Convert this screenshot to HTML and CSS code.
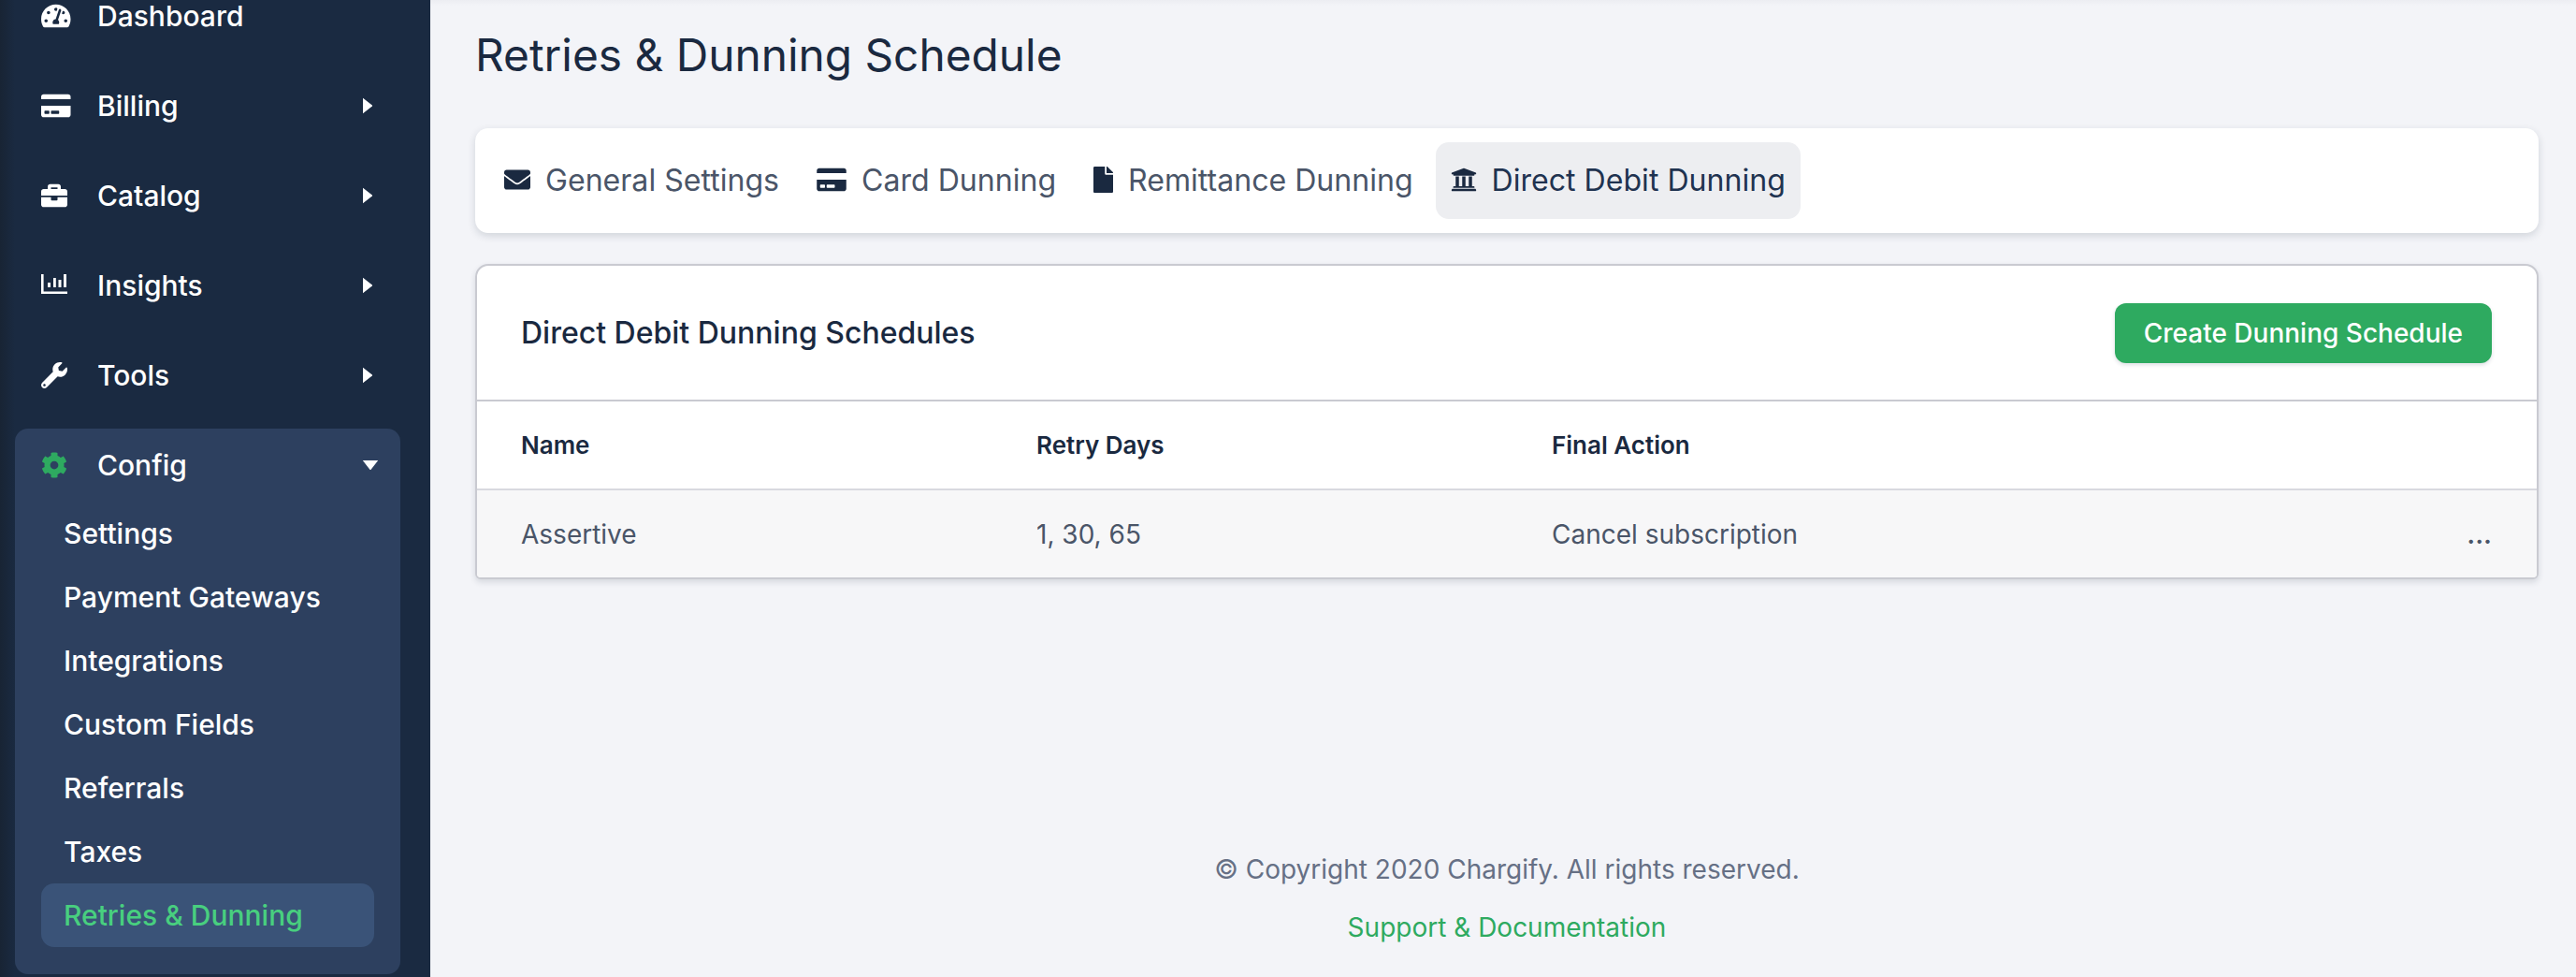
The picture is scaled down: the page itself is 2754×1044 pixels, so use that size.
FILE: index.html
```html
<!DOCTYPE html>
<html lang="en">
<head>
<meta charset="utf-8">
<title>Retries &amp; Dunning Schedule</title>
<link rel="stylesheet" href="styles.css">
</head>
<body>
<div class="app">
  <aside class="sidebar">
    <nav class="nav">
      <a class="nav-row"><svg class="nav-icon" preserveAspectRatio="xMinYMid meet" viewBox="0 0 576 512"><path d="M288 32C128.94 32 0 160.94 0 320c0 52.8 14.25 102.26 39.06 144.8 5.61 9.62 16.3 15.2 27.44 15.2h443c11.14 0 21.83-5.58 27.44-15.2C561.75 422.26 576 372.8 576 320c0-159.06-128.94-288-288-288zm0 64c14.71 0 26.58 10.13 30.32 23.65-1.11 2.26-2.64 4.23-3.45 6.67l-9.22 27.67c-5.13 3.49-10.97 6.01-17.64 6.01-17.67 0-32-14.33-32-32S270.33 96 288 96zM96 384c-17.67 0-32-14.33-32-32s14.33-32 32-32 32 14.33 32 32-14.33 32-32 32zm48-160c-17.67 0-32-14.33-32-32s14.33-32 32-32 32 14.33 32 32-14.33 32-32 32zm246.77-72.41l-61.33 184C343.13 347.33 352 364.54 352 384c0 11.72-3.38 22.55-8.88 32H232.88c-5.5-9.45-8.88-20.28-8.88-32 0-33.94 26.5-61.43 59.9-63.59l61.34-184.01c4.17-12.56 17.73-19.45 30.36-15.17 12.57 4.19 19.35 17.79 15.17 30.36zm14.66 57.2l15.52-46.55c3.47-1.29 7.13-2.23 11.05-2.23 17.67 0 32 14.33 32 32s-14.33 32-32 32c-11.38-.01-20.89-6.28-26.57-15.22zM480 384c-17.67 0-32-14.33-32-32s14.33-32 32-32 32 14.33 32 32-14.33 32-32 32z"/></svg><span class="nav-label">Dashboard</span></a>
      <a class="nav-row"><svg class="nav-icon" preserveAspectRatio="xMinYMid meet" viewBox="0 0 576 512"><path d="M0 432c0 26.5 21.5 48 48 48h480c26.5 0 48-21.5 48-48V256H0v176zm192-68c0-6.6 5.4-12 12-12h136c6.6 0 12 5.4 12 12v40c0 6.6-5.4 12-12 12H204c-6.6 0-12-5.4-12-12v-40zm-128 0c0-6.6 5.4-12 12-12h72c6.6 0 12 5.4 12 12v40c0 6.6-5.4 12-12 12H76c-6.6 0-12-5.4-12-12v-40zM576 80v48H0V80c0-26.5 21.5-48 48-48h480c26.5 0 48 21.5 48 48z"/></svg><span class="nav-label">Billing</span><svg class="caret" viewBox="0 0 10 18"><path d="M0 0.8 9.6 8.2a1 1 0 0 1 0 1.6L0 17.2z"/></svg></a>
      <a class="nav-row"><svg class="nav-icon" preserveAspectRatio="xMinYMid meet" viewBox="0 0 512 512"><path d="M320 336c0 8.84-7.16 16-16 16h-96c-8.84 0-16-7.16-16-16v-48H0v144c0 25.6 22.4 48 48 48h416c25.6 0 48-22.4 48-48V288H320v48zm144-208h-80V80c0-25.6-22.4-48-48-48H176c-25.6 0-48 22.4-48 48v48H48c-25.6 0-48 22.4-48 48v80h512v-80c0-25.6-22.4-48-48-48zm-144 0H192V96h128v32z"/></svg><span class="nav-label">Catalog</span><svg class="caret" viewBox="0 0 10 18"><path d="M0 0.8 9.6 8.2a1 1 0 0 1 0 1.6L0 17.2z"/></svg></a>
      <a class="nav-row"><svg class="nav-icon" preserveAspectRatio="xMinYMid meet" viewBox="0 0 32 28"><path d="M0 2h2.600v18.500H28V23H0zM7 11h3v5H7zM13 6h2.800v10H13zM18.500 8h3v8h-3zM24 2h3v14h-3z"/></svg><span class="nav-label">Insights</span><svg class="caret" viewBox="0 0 10 18"><path d="M0 0.8 9.6 8.2a1 1 0 0 1 0 1.6L0 17.2z"/></svg></a>
      <a class="nav-row"><svg class="nav-icon" preserveAspectRatio="xMinYMid meet" viewBox="0 0 512 512"><path d="M507.730 109.100c-2.240-9.030-13.540-12.090-20.120-5.510l-74.360 74.360-67.880-11.310-11.310-67.880 74.360-74.360c6.620-6.620 3.430-17.900-5.660-20.160-47.380-11.740-99.550.91-136.580 37.930-39.640 39.640-50.550 97.100-34.050 147.200L18.740 402.760c-24.990 24.990-24.990 65.510 0 90.500 24.990 24.990 65.510 24.990 90.500 0l213.210-213.210c50.120 16.710 107.470 5.680 147.370-34.220 37.070-37.070 49.700-89.320 37.910-136.730zM64 472c-13.250 0-24-10.750-24-24 0-13.260 10.750-24 24-24s24 10.740 24 24c0 13.250-10.750 24-24 24z"/></svg><span class="nav-label">Tools</span><svg class="caret" viewBox="0 0 10 18"><path d="M0 0.8 9.600 8.200a1 1 0 0 1 0 1.600L0 17.200z"/></svg></a>
      <div class="nav-group">
        <a class="nav-row nav-row-group"><svg class="nav-icon nav-icon-green" preserveAspectRatio="xMinYMid meet" viewBox="0 0 512 512"><path d="M487.400 315.700l-42.600-24.600c4.300-23.200 4.300-47 0-70.200l42.600-24.600c4.900-2.800 7.100-8.600 5.500-14-11.100-35.600-30-67.800-54.700-94.600-3.800-4.100-10-5.100-14.800-2.300L380.800 110c-17.900-15.400-38.500-27.300-60.800-35.100V25.800c0-5.600-3.900-10.500-9.400-11.700-36.700-8.200-74.300-7.800-109.200 0-5.500 1.200-9.400 6.100-9.400 11.700V75c-22.200 7.900-42.800 19.800-60.800 35.100L88.700 85.500c-4.900-2.800-11-1.900-14.800 2.300-24.700 26.700-43.600 58.900-54.700 94.600-1.700 5.400.6 11.200 5.500 14L67.300 221c-4.300 23.200-4.300 47 0 70.200l-42.600 24.600c-4.900 2.800-7.100 8.600-5.500 14 11.100 35.600 30 67.800 54.700 94.600 3.800 4.100 10 5.100 14.800 2.300l42.600-24.600c17.900 15.400 38.500 27.300 60.800 35.100v49.200c0 5.600 3.900 10.500 9.400 11.700 36.700 8.200 74.300 7.800 109.200 0 5.500-1.200 9.400-6.100 9.400-11.700v-49.200c22.200-7.900 42.800-19.800 60.800-35.100l42.600 24.600c4.900 2.800 11 1.900 14.800-2.300 24.700-26.700 43.600-58.900 54.700-94.600 1.500-5.500-.7-11.300-5.600-14.100zM256 336c-44.100 0-80-35.900-80-80s35.900-80 80-80 80 35.900 80 80-35.900 80-80 80z"/></svg><span class="nav-label">Config</span><svg class="caret-down" viewBox="0 0 18 10"><path d="M0.800 0 8.200 9.600a1 1 0 0 0 1.600 0L17.200 0z"/></svg></a>
        <a class="sub-row">Settings</a>
        <a class="sub-row">Payment Gateways</a>
        <a class="sub-row">Integrations</a>
        <a class="sub-row">Custom Fields</a>
        <a class="sub-row">Referrals</a>
        <a class="sub-row">Taxes</a>
        <a class="sub-row sub-row-active">Retries &amp; Dunning</a>
      </div>
    </nav>
  </aside>
  <main class="main">
    <h1 class="title">Retries &amp; Dunning Schedule</h1>
    <div class="tabs">
      <a class="tab"><svg class="tab-icon icon-square" viewBox="0 0 512 512"><path d="M502.300 190.800c3.900-3.100 9.700-.2 9.700 4.700V400c0 26.500-21.500 48-48 48H48c-26.500 0-48-21.500-48-48V195.600c0-5 5.700-7.800 9.700-4.700 22.400 17.400 52.100 39.500 154.100 113.600 21.100 15.400 56.700 47.800 92.200 47.600 35.700.3 72-32.800 92.300-47.600 102-74.100 131.600-96.300 154-113.700zM256 320c23.200.4 56.600-29.200 73.400-41.400 132.700-96.300 142.800-104.700 173.400-128.700 5.800-4.500 9.200-11.500 9.200-18.900v-19c0-26.500-21.500-48-48-48H48C21.500 64 0 85.500 0 112v19c0 7.400 3.400 14.300 9.200 18.900 30.600 23.900 40.700 32.400 173.400 128.700 16.800 12.200 50.200 41.800 73.400 41.400z"/></svg>General Settings</a>
      <a class="tab"><svg class="tab-icon icon-wide" viewBox="0 0 576 512"><path d="M0 432c0 26.500 21.500 48 48 48h480c26.500 0 48-21.500 48-48V256H0v176zm192-68c0-6.600 5.400-12 12-12h136c6.600 0 12 5.400 12 12v40c0 6.600-5.400 12-12 12H204c-6.600 0-12-5.400-12-12v-40zm-128 0c0-6.600 5.400-12 12-12h72c6.600 0 12 5.400 12 12v40c0 6.600-5.400 12-12 12H76c-6.600 0-12-5.400-12-12v-40zM576 80v48H0V80c0-26.500 21.500-48 48-48h480c26.500 0 48 21.500 48 48z"/></svg>Card Dunning</a>
      <a class="tab"><svg class="tab-icon icon-narrow" viewBox="0 0 384 512"><path d="M224 136V0H24C10.700 0 0 10.700 0 24v464c0 13.300 10.700 24 24 24h336c13.300 0 24-10.700 24-24V160H248c-13.200 0-24-10.800-24-24zm160-14.100v6.100H256V0h6.100c6.400 0 12.500 2.500 17 7l97.900 98c4.500 4.500 7 10.600 7 16.900z"/></svg>Remittance Dunning</a>
      <a class="tab tab-active"><svg class="tab-icon icon-square" viewBox="0 0 512 512"><path d="M496 128v16a8 8 0 0 1-8 8h-24v12c0 6.627-5.373 12-12 12H60c-6.627 0-12-5.373-12-12v-12H24a8 8 0 0 1-8-8v-16a8 8 0 0 1 4.941-7.392l232-88a7.996 7.996 0 0 1 6.118 0l232 88A8 8 0 0 1 496 128zm-24 304H40c-13.255 0-24 10.745-24 24v16a8 8 0 0 0 8 8h464a8 8 0 0 0 8-8v-16c0-13.255-10.745-24-24-24zM96 192v192H60c-6.627 0-12 5.373-12 12v20h416v-20c0-6.627-5.373-12-12-12h-36V192h-64v192h-64V192h-64v192h-64V192H96z"/></svg>Direct Debit Dunning</a>
    </div>
    <section class="card">
      <header class="card-head">
        <h2 class="card-title">Direct Debit Dunning Schedules</h2>
        <a class="btn">Create Dunning Schedule</a>
      </header>
      <div class="grid grid-head">
        <span>Name</span><span>Retry Days</span><span>Final Action</span><span></span>
      </div>
      <div class="grid grid-row">
        <span>Assertive</span><span>1, 30, 65</span><span>Cancel subscription</span><span class="more">...</span>
      </div>
    </section>
    <footer class="footer">
      <p class="copy">© Copyright 2020 Chargify. All rights reserved.</p>
      <a class="support">Support &amp; Documentation</a>
    </footer>
  </main>
</div>
</body>
</html>
```

FILE: styles.css
```css
* { box-sizing: border-box; }
html, body { margin: 0; height: 100%; overflow: hidden; }
body { font-family: Inter, "Liberation Sans", sans-serif; background: #f3f4f8; color: #1a2940; }
a { display: block; }

.app { display: flex; height: 1044px; }

.sidebar {
  width: 460px;
  flex: none;
  background: linear-gradient(to right, #182434 0, #1a2a41 16px);
  padding: 0 32px 0 16px;
  overflow: hidden;
}
.nav { margin-top: -31px; }
.nav-row {
  display: flex;
  align-items: center;
  height: 96px;
  padding-left: 28px;
  padding-right: 30px;
  color: #fff;
  font-size: 30px;
  font-weight: 500;
}
.nav-icon { width: 32px; height: 28px; fill: #fff; flex: none; }
.nav-icon-green { fill: #2eaa60; }
.nav-label { margin-left: 28px; flex: 1; }
.caret { width: 10px; height: 18px; fill: #fff; flex: none; }
.caret-down { width: 18px; height: 10px; fill: #fff; flex: none; }

.nav-group {
  margin-top: 9px;
  background: #2d405f;
  border-radius: 14px;
  height: 583px;
}
.nav-row-group { height: 78px; padding-right: 23px; }
.sub-row {
  height: 68px;
  line-height: 68px;
  margin: 0 28px;
  padding-left: 24px;
  border-radius: 14px;
  color: #fff;
  font-size: 30px;
  font-weight: 500;
}
.sub-row-active { background: #3a5378; color: #48cf7f; }

.main {
  flex: 1;
  min-width: 0;
  padding: 0 40px 0 48px;
  display: flex;
  flex-direction: column;
  background: linear-gradient(#ecedf2 0, #f3f4f8 6px);
}
.title { margin: 29px 0 0; font-size: 47.8px; line-height: 60px; font-weight: 400; color: #1a2940; }
.tabs {
  display: flex;
  align-items: center;
  gap: 8px;
  margin-top: 48px;
  height: 112px;
  padding: 0 15px;
  background: #fff;
  border-radius: 14px;
  box-shadow: 0 3px 8px rgba(26, 41, 64, 0.16);
}
.tab {
  display: flex;
  align-items: center;
  height: 82px;
  padding: 0 16px 2px;
  border-radius: 14px;
  color: #4a5568;
  font-size: 32.1px;
}
.tab-icon { height: 28px; fill: #1a2940; margin-right: 16px; flex: none; }
.icon-square { width: 28px; }
.icon-wide { width: 32px; }
.icon-narrow { width: 21px; }
.tab-active { background: #edeef1; color: #1f3350; }

.card {
  margin-top: 33px;
  height: 337px;
  background: #fff;
  border: 2px solid #c9cad1;
  border-radius: 14px 14px 6px 6px;
  overflow: hidden;
  box-shadow: 0 3px 6px rgba(26, 41, 64, 0.14);
}
.card-head {
  display: flex;
  align-items: center;
  justify-content: space-between;
  height: 145px;
  padding: 0 48px 0 47px;
  border-bottom: 2px solid #c9cad1;
}
.card-title { margin: 0; font-size: 32px; font-weight: 500; color: #1a2940; }
.btn {
  display: flex;
  align-items: center;
  height: 64px;
  padding: 0 31px;
  border-radius: 12px;
  background: #2eaa60;
  color: #fff;
  font-size: 28px;
  font-weight: 500;
  box-shadow: 0 2px 4px rgba(26, 41, 64, 0.15);
}
.grid {
  display: grid;
  grid-template-columns: 551px 551px 1fr auto;
  align-items: center;
  padding: 0 48px 0 47px;
  font-size: 26px;
}
.grid-head { height: 95px; font-weight: 600; color: #1a2940; border-bottom: 2px solid #d8d9df; }
.grid-row { height: 93px; background: #f7f7f8; color: #4a5568; font-size: 28px; }
.more { font-weight: 600; }

.footer { margin-top: auto; padding-bottom: 36px; text-align: center; font-size: 28px; }
.copy { margin: 0 0 28px; color: #667085; line-height: 34px; }
.support { color: #2eaa60; line-height: 34px; }
```
